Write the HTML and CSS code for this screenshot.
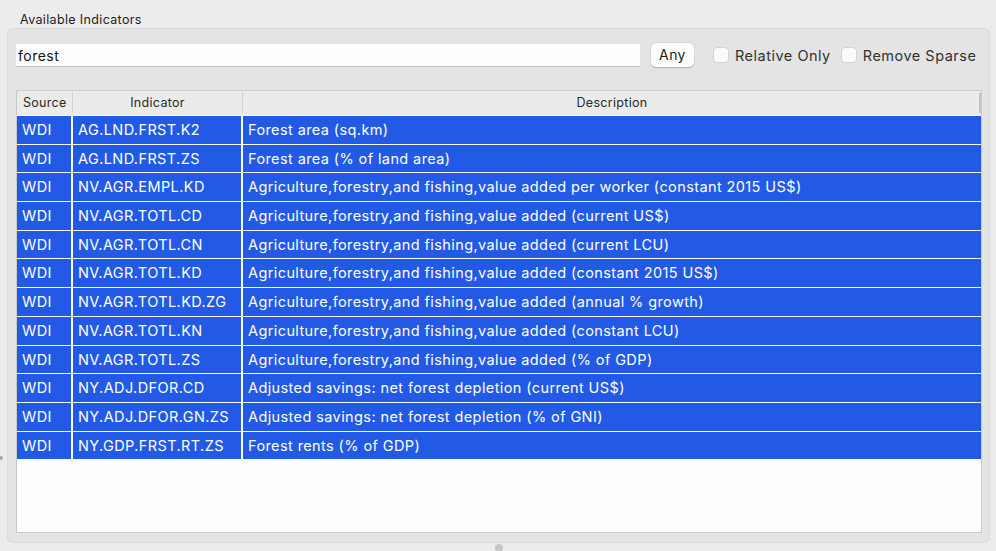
FILE: index.html
```html
<!DOCTYPE html>
<html>
<head>
<meta charset="utf-8">
<link rel="stylesheet" href="styles.css">
</head>
<body>
<div class="window">
  <div class="title">Available Indicators</div>
  <div class="group">
    <div class="toolbar">
      <div class="search">forest</div>
      <div class="btn">Any</div>
      <label class="check"><span class="box"></span>Relative Only</label>
      <label class="check"><span class="box"></span>Remove Sparse</label>
    </div>
    <div class="table">
      <div class="thead">
        <div class="th c1">Source</div>
        <div class="th c2 center">Indicator</div>
        <div class="th c3 center">Description</div>
        <div class="scroll"></div>
      </div>
      <div class="tbody">
        <div class="row"><div class="td c1">WDI</div><div class="td c2">AG.LND.FRST.K2</div><div class="td c3">Forest area (sq.km)</div></div>
        <div class="row"><div class="td c1">WDI</div><div class="td c2">AG.LND.FRST.ZS</div><div class="td c3">Forest area (% of land area)</div></div>
        <div class="row"><div class="td c1">WDI</div><div class="td c2">NV.AGR.EMPL.KD</div><div class="td c3">Agriculture,forestry,and fishing,value added per worker (constant 2015 US$)</div></div>
        <div class="row"><div class="td c1">WDI</div><div class="td c2">NV.AGR.TOTL.CD</div><div class="td c3">Agriculture,forestry,and fishing,value added (current US$)</div></div>
        <div class="row"><div class="td c1">WDI</div><div class="td c2">NV.AGR.TOTL.CN</div><div class="td c3">Agriculture,forestry,and fishing,value added (current LCU)</div></div>
        <div class="row"><div class="td c1">WDI</div><div class="td c2">NV.AGR.TOTL.KD</div><div class="td c3">Agriculture,forestry,and fishing,value added (constant 2015 US$)</div></div>
        <div class="row"><div class="td c1">WDI</div><div class="td c2">NV.AGR.TOTL.KD.ZG</div><div class="td c3">Agriculture,forestry,and fishing,value added (annual % growth)</div></div>
        <div class="row"><div class="td c1">WDI</div><div class="td c2">NV.AGR.TOTL.KN</div><div class="td c3">Agriculture,forestry,and fishing,value added (constant LCU)</div></div>
        <div class="row"><div class="td c1">WDI</div><div class="td c2">NV.AGR.TOTL.ZS</div><div class="td c3">Agriculture,forestry,and fishing,value added (% of GDP)</div></div>
        <div class="row"><div class="td c1">WDI</div><div class="td c2">NY.ADJ.DFOR.CD</div><div class="td c3">Adjusted savings: net forest depletion (current US$)</div></div>
        <div class="row"><div class="td c1">WDI</div><div class="td c2">NY.ADJ.DFOR.GN.ZS</div><div class="td c3">Adjusted savings: net forest depletion (% of GNI)</div></div>
        <div class="row"><div class="td c1">WDI</div><div class="td c2">NY.GDP.FRST.RT.ZS</div><div class="td c3">Forest rents (% of GDP)</div></div>
      </div>
    </div>
  </div>
  <div class="dot-left"></div>
  <div class="dot-bottom"></div>
</div>
</body>
</html>
```

FILE: styles.css
```css
html, body {
  margin: 0;
  padding: 0;
  background: #ececec;
}
body {
  font-family: Inter, "Liberation Sans", sans-serif;
  color: #1e1e1e;
  width: 996px;
  height: 551px;
  overflow: hidden;
}
.window {
  position: relative;
  width: 996px;
  height: 551px;
  padding: 11px 6px 0 7px;
  box-sizing: border-box;
}
.title {
  font-size: 12.5px;
  letter-spacing: 0.35px;
  padding-left: 13px;
  height: 17px;
  line-height: 17px;
}
.group {
  margin-top: 0;
  height: 515px;
  background: #e4e4e4;
  border: 1px solid #dadada;
  border-radius: 6px;
  box-sizing: border-box;
  padding: 14px 8px 9px 8px;
  display: flex;
  flex-direction: column;
}
.toolbar {
  display: flex;
  align-items: center;
  height: 24px;
}
.search {
  width: 624px;
  height: 23px;
  box-sizing: border-box;
  background: #fefefe;
  border-bottom: 1px solid #c3c3c3;
  font-size: 14px;
  letter-spacing: 0.5px;
  line-height: 23px;
  padding-left: 2px;
  color: #111;
}
.btn {
  margin-left: 11px;
  width: 43px;
  height: 24px;
  box-sizing: border-box;
  background: #fefefe;
  border-radius: 5px;
  box-shadow: 0 0.5px 1.5px rgba(0,0,0,0.25);
  font-size: 14px;
  letter-spacing: 0.4px;
  line-height: 24px;
  text-align: center;
  color: #222;
}
.check {
  display: flex;
  align-items: center;
  font-size: 14.5px;
  letter-spacing: 0.5px;
  color: #333;
  margin-left: 19px;
}
.check + .check {
  margin-left: 10px;
}
.box {
  width: 16px;
  height: 16px;
  box-sizing: border-box;
  background: #fbfbfb;
  border: 1px solid #d4d4d4;
  border-radius: 4px;
  margin-right: 6px;
}
.table {
  margin-top: 23px;
  width: 966px;
  flex: 1;
  background: #fdfdfd;
  border: 1px solid #c9c9c9;
  border-top-color: #cfcfcf;
  box-sizing: border-box;
  display: flex;
  flex-direction: column;
}
.thead {
  display: flex;
  height: 24px;
  background: #ebebea;
  position: relative;
}
.th {
  font-size: 12.5px;
  letter-spacing: 0.3px;
  line-height: 21px;
  color: #2a2a2a;
  box-sizing: border-box;
  padding-left: 6px;
  border-right: 1px solid #d2d2d2;
  margin: 1px 0 2px 0;
}
.th.center {
  text-align: center;
  padding-left: 0;
}
.c1 { width: 56px; }
.c2 { width: 170px; }
.c3 { width: 738px; }
.th.c3 { border-right: none; }
.scroll {
  position: absolute;
  right: 0;
  top: 2px;
  width: 2px;
  height: 20px;
  background: #c3c3c3;
}
.tbody {
  display: flex;
  flex-direction: column;
}
.row {
  display: flex;
  height: 28.7px;
  border-top: 1px solid #fdfdfd;
  box-sizing: border-box;
}
.td {
  background: #235ae5;
  color: #ffffff;
  font-size: 14.5px;
  letter-spacing: 0.4px;
  line-height: 27.7px;
  box-sizing: border-box;
  padding-left: 5px;
  border-right: 2px solid #fdfdfd;
  white-space: nowrap;
}
.td.c3 { border-right: none; width: 738px; }
.dot-left {
  position: absolute;
  left: -1px;
  top: 456px;
  width: 4px;
  height: 4px;
  border-radius: 50%;
  background: #a8a8a8;
}
.dot-bottom {
  position: absolute;
  left: 495px;
  top: 544px;
  width: 8px;
  height: 8px;
  border-radius: 50%;
  background: #c8c8c8;
}
```
